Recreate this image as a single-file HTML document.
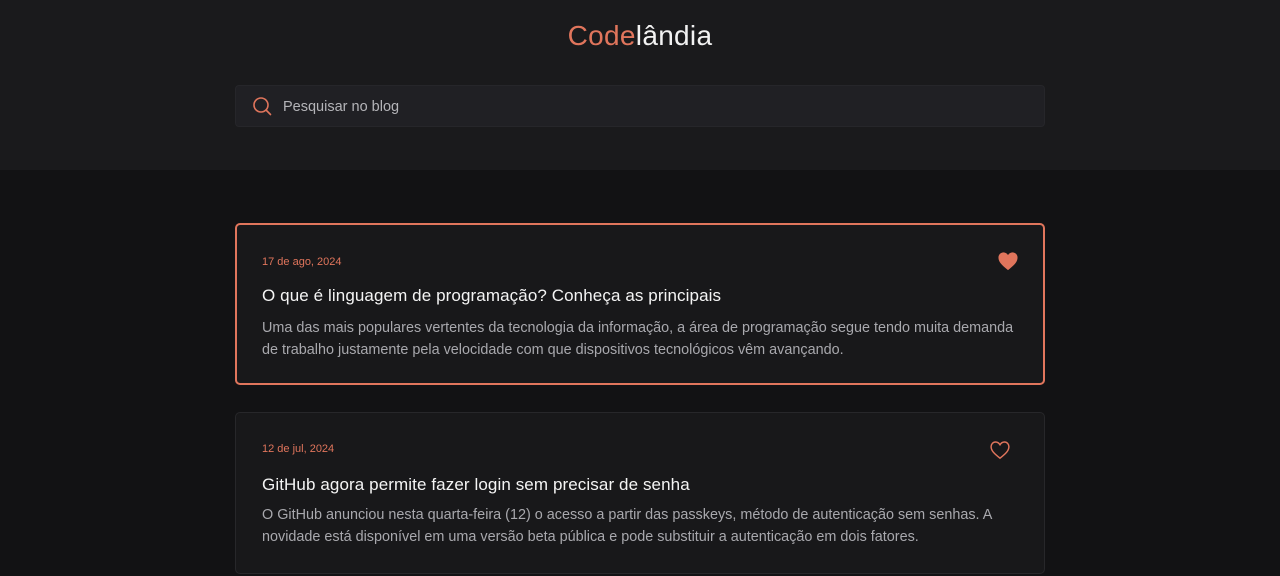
<!DOCTYPE html>
<html><head><meta charset="utf-8"><style>
*{margin:0;padding:0;box-sizing:border-box}
body{width:1280px;height:576px;overflow:hidden;background:#121214;font-family:"Liberation Sans",sans-serif}
header{height:170px;background:#1a1a1c;position:relative}
h1{position:absolute;top:20px;left:0;width:1280px;text-align:center;font-size:28px;font-weight:normal;color:#f2f2f2;letter-spacing:0.3px}
h1 span{color:#e0755c}
.search{position:absolute;left:235px;top:85px;width:810px;height:42px;background:#202024;border:1px solid #26262a;border-radius:4px}
.search svg{position:absolute;left:16px;top:10px}
.search div{position:absolute;left:47px;top:13px;font-size:14.5px;color:#b4b4b8}
.card{position:absolute;left:235px;width:810px;height:162px;background:#18181a;border:1px solid #27272a;border-radius:5px}
.card.a{border:2px solid #e0755c;top:223px}
.card.b{top:412px}
.date{position:absolute;left:26px;top:31px;font-size:11px;color:#e0755c}
.card.a .date,.card.a .title,.card.a .desc{left:25px}
.title{position:absolute;left:26px;top:61px;font-size:17px;color:#f4f4f4;letter-spacing:0.1px}
.desc{position:absolute;left:26px;top:93px;width:760px;font-size:14.4px;line-height:21.5px;color:#a8a8ad;letter-spacing:0}
.heart{position:absolute;right:24px;top:26px}
.card.b .date{top:30px}.card.b .title{top:62px}.card.b .desc{top:92px}.card.b .heart{top:27px;right:33px}
</style></head><body>
<header>
<h1><span>Code</span>lândia</h1>
<div class="search"><svg width="20" height="20" viewBox="0 0 20 20" fill="none" stroke="#e0755c" stroke-width="1.6"><circle cx="9" cy="9" r="7"/><path d="M14 14l4.5 4.5" stroke-linecap="round"/></svg><div>Pesquisar no blog</div></div>
</header>
<div class="card a">
<div class="date">17 de ago, 2024</div>
<svg class="heart" width="22" height="20" viewBox="0 0 24 22"><path d="M12 21C5 15.5 1.5 12 1.5 7.2 1.5 4 4 1.5 7 1.5c2.2 0 3.9 1.2 5 3 1.1-1.8 2.8-3 5-3 3 0 5.5 2.5 5.5 5.7 0 4.8-3.5 8.3-10.5 13.8z" fill="#e0755c"/></svg>
<div class="title">O que é linguagem de programação? Conheça as principais</div>
<div class="desc">Uma das mais populares vertentes da tecnologia da informação, a área de programação segue tendo muita demanda<br>de trabalho justamente pela velocidade com que dispositivos tecnológicos vêm avançando.</div>
</div>
<div class="card b">
<div class="date">12 de jul, 2024</div>
<svg class="heart" width="22" height="20" viewBox="0 0 24 22"><path d="M12 20C5.3 14.8 2.2 11.6 2.2 7.3 2.2 4.4 4.4 2.2 7.1 2.2c2.1 0 3.8 1.2 4.9 3 1.1-1.8 2.8-3 4.9-3 2.7 0 4.9 2.200 4.9 5.1 0 4.3-3.1 7.5-9.8 12.7z" fill="none" stroke="#e0755c" stroke-width="1.6"/></svg>
<div class="title">GitHub agora permite fazer login sem precisar de senha</div>
<div class="desc">O GitHub anunciou nesta quarta-feira (12) o acesso a partir das passkeys, método de autenticação sem senhas. A<br>novidade está disponível em uma versão beta pública e pode substituir a autenticação em dois fatores.</div>
</div>
</body></html>
